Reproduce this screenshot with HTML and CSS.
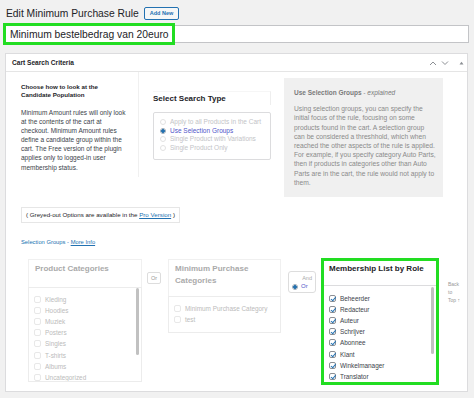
FILE: index.html
```html
<!DOCTYPE html>
<html lang="en">
<head>
  <meta charset="UTF-8">
  <meta name="viewport" content="width=device-width, initial-scale=1.0">
  <title>Edit Minimum Purchase Rule</title>
  <link rel="stylesheet" href="styles.css">
</head>
<body>
  <div class="page">
    <div class="title-row">
      <h1 class="title">Edit Minimum Purchase Rule</h1>
      <a class="add-new">Add New</a>
    </div>

    <div class="title-field">
      <input class="title-input" type="text" value="Minimum bestelbedrag van 20euro">
      <span class="highlight"></span>
    </div>

    <div class="postbox">
      <div class="postbox-header">
        <h2>Cart Search Criteria</h2>
        <div class="handle-actions">
          <svg width="8" height="6" viewBox="0 0 8 6"><polyline points="1,5 4,2 7,5" fill="none" stroke="#8c8f94" stroke-width="1"/></svg>
          <svg width="8" height="6" viewBox="0 0 8 6"><polyline points="1,1.5 4,4.5 7,1.5" fill="none" stroke="#8c8f94" stroke-width="1"/></svg>
          <svg width="5" height="4" viewBox="0 0 5 4"><polygon points="0.5,3.5 2.5,0.8 4.5,3.5" fill="#8c8f94"/></svg>
        </div>
      </div>

      <div class="inside">
        <div class="intro">
          <div class="intro-text">
            <h3>Choose how to look at the Candidate Population</h3>
            <p>Minimum Amount rules will only look at the contents of the cart at checkout. Minimum Amount rules define a candidate group within the cart. The Free version of the plugin applies only to logged-in user membership status.</p>
          </div>

          <div class="search-type">
            <h3>Select Search Type</h3>
            <div class="radio-box">
              <label class="radio disabled"><span class="dot"></span>Apply to all Products in the Cart</label>
              <label class="radio checked"><span class="dot"></span>Use Selection Groups</label>
              <label class="radio disabled"><span class="dot"></span>Single Product with Variations</label>
              <label class="radio disabled"><span class="dot"></span>Single Product Only</label>
            </div>
          </div>

          <div class="explain">
            <h4>Use Selection Groups <em>- explained</em></h4>
            <p>Using selection groups, you can specify the initial focus of the rule, focusing on some products found in the cart. A selection group can be considered a threshhold, which when reached the other aspects of the rule is applied. For example, if you specify category Auto Parts, then if products in categories other than Auto Parts are in the cart, the rule would not apply to them.</p>
          </div>
        </div>

        <div class="notice">( Greyed-out Options are available in the <a>Pro Version</a> )</div>

        <div class="groups-link">Selection Groups - <a>More Info</a></div>

        <div class="groups">
          <div class="group disabled">
            <div class="group-head">Product Categories</div>
            <div class="group-list tall-list">
              <div class="item"><span class="box"></span>Kleding</div>
              <div class="item"><span class="box"></span>Hoodies</div>
              <div class="item"><span class="box"></span>Muziek</div>
              <div class="item"><span class="box"></span>Posters</div>
              <div class="item"><span class="box"></span>Singles</div>
              <div class="item"><span class="box"></span>T-shirts</div>
              <div class="item"><span class="box"></span>Albums</div>
              <div class="item"><span class="box"></span>Uncategorized</div>
              <span class="scrollbar"></span>
            </div>
          </div>

          <div class="or-btn">Or</div>

          <div class="group disabled mpc">
            <div class="group-head two-line">Minimum Purchase Categories</div>
            <div class="group-list">
              <div class="item"><span class="box"></span>Minimum Purchase Category</div>
              <div class="item"><span class="box"></span>test</div>
            </div>
          </div>

          <div class="andor">
            <div class="andor-and">And</div>
            <label class="radio checked"><span class="dot"></span>Or</label>
          </div>

          <div class="group role">
            <div class="group-head">Membership List by Role</div>
            <div class="group-list tall-list">
              <div class="item"><span class="box on"></span>Beheerder</div>
              <div class="item"><span class="box on"></span>Redacteur</div>
              <div class="item"><span class="box on"></span>Auteur</div>
              <div class="item"><span class="box on"></span>Schrijver</div>
              <div class="item"><span class="box on"></span>Abonnee</div>
              <div class="item"><span class="box on"></span>Klant</div>
              <div class="item"><span class="box on"></span>Winkelmanager</div>
              <div class="item"><span class="box on"></span>Translator</div>
              <span class="scrollbar"></span>
            </div>
          </div>

          <div class="back-top">Back<br>to<br>Top &#8593;</div>
        </div>
      </div>
    </div>
  </div>
</body>
</html>
```

FILE: styles.css
```css
body {
  margin: 0;
  background: #f1f1f1;
  font-family: "Liberation Sans", Arial, sans-serif;
  color: #3c434a;
}
.page {
  padding: 4px 5px 0 5px;
}
.title-row {
  display: flex;
  align-items: center;
  gap: 5px;
  height: 18px;
  padding-left: 1px;
}
.title {
  margin: 0;
  font-size: 10.3px;
  font-weight: 400;
  color: #1d2327;
}
.add-new {
  font-size: 5.5px;
  font-weight: bold;
  color: #2271b1;
  border: 1px solid #2271b1;
  border-radius: 2px;
  background: #f6f7f7;
  padding: 0 5px;
  height: 11px;
  line-height: 11px;
}
.title-field {
  position: relative;
  margin-top: 3px;
}
.title-input {
  display: block;
  box-sizing: border-box;
  width: 100%;
  height: 18px;
  margin: 0;
  border: 1px solid #c3c4c7;
  background: #fff;
  padding: 0 4px;
  font-family: "Liberation Sans", Arial, sans-serif;
  font-size: 10.3px;
  color: #1d2327;
}
.highlight {
  position: absolute;
  left: -2px;
  top: -2px;
  width: 172px;
  height: 22px;
  box-sizing: border-box;
  border: 3px solid #22dd22;
}
.postbox {
  margin: 10px 1px 0 0;
  background: #fff;
  border: 1px solid #dcdcde;
}
.postbox-header {
  display: flex;
  align-items: center;
  justify-content: space-between;
  height: 17px;
  border-bottom: 1px solid #e5e5e5;
  padding: 0 3px 0 6px;
}
.postbox-header h2 {
  margin: 0;
  font-size: 6.6px;
  font-weight: bold;
  color: #1d2327;
}
.handle-actions {
  display: flex;
  align-items: center;
  gap: 4px;
}
.handle-actions svg {
  display: block;
}
.handle-actions svg:last-child {
  margin-left: 6px;
}
.inside {
  padding: 0 0 6px 15px;
}
.intro {
  display: flex;
  align-items: flex-start;
}
.intro-text {
  width: 110px;
  padding: 11px 7px 5px 0;
  border-right: 1px solid #f0f0f0;
}
.intro-text h3 {
  max-width: 96px;
  margin: 0 0 9px;
  font-size: 6.2px;
  line-height: 8px;
  font-weight: bold;
  color: #1d2327;
}
.intro-text p {
  margin: 0;
  font-size: 6.5px;
  line-height: 9.1px;
  color: #3c434a;
}
.search-type {
  width: 118px;
  margin: 19px 0 0 14px;
}
.search-type h3 {
  margin: 0;
  font-size: 8px;
  line-height: 13px;
  font-weight: bold;
  color: #1d2327;
  border-right: 1px solid #eeeeee;
  border-top: 1px solid #f6f6f6;
}
.radio-box {
  margin-top: 7px;
  border: 1px solid #dcdcde;
  border-radius: 2px;
  padding: 5px 6px 7px;
}
.radio {
  display: flex;
  align-items: center;
  gap: 4px;
  font-size: 6.5px;
  line-height: 8.5px;
  color: #c3c4c7;
}
.radio .dot {
  width: 6px;
  height: 6px;
  box-sizing: border-box;
  border: 1px solid #e2e2e2;
  border-radius: 50%;
  background: #fff;
}
.radio.checked {
  color: #4f55c9;
}
.radio.checked .dot {
  border-color: #9aa8b5;
  background: radial-gradient(circle, #2271b1 0 1.6px, #fff 1.9px);
}
.explain {
  width: 159px;
  box-sizing: border-box;
  margin: 6px 0 0 13px;
  background: #f0f0f0;
  padding: 10px 7px 10px 10px;
  color: #8a8a8a;
}
.explain h4 {
  margin: 0 0 7px;
  font-size: 6.5px;
  line-height: 9.2px;
  font-weight: bold;
  color: #7a7a7a;
}
.explain h4 em {
  font-weight: normal;
}
.explain p {
  margin: 0;
  font-size: 6.7px;
  line-height: 9.2px;
}
.notice {
  display: inline-block;
  margin-top: 10px;
  border: 1px solid #e6e6e6;
  padding: 0 4px;
  line-height: 14px;
  font-size: 6.2px;
  color: #1d2327;
}
.notice a,
.groups-link a {
  color: #2271b1;
  text-decoration: underline;
}
.groups-link {
  margin-top: 15px;
  font-size: 5.8px;
  line-height: 8px;
  color: #2271b1;
}
.groups {
  display: flex;
  align-items: flex-start;
  margin-top: 12px;
  padding-left: 7px;
}
.group {
  width: 114px;
  box-sizing: border-box;
}
.group.disabled {
  margin-top: 1px;
}
.group-head {
  box-sizing: border-box;
  min-height: 28px;
  border: 1px solid #f0f0f0;
  border-bottom: none;
  padding: 3px 6px 0;
  font-size: 8px;
  line-height: 12px;
  font-weight: bold;
  color: #aaaaaa;
}
.group-head.two-line {
  padding-bottom: 9px;
}
.group-list {
  position: relative;
  box-sizing: border-box;
  border: 1px solid #ececec;
  padding: 6px 0 7px 5px;
}
.group-list.tall-list {
  height: 95px;
  overflow: hidden;
}
.item {
  display: flex;
  align-items: center;
  gap: 4px;
  height: 11.1px;
  font-size: 6.4px;
  color: #bbbbbb;
}
.box {
  width: 7px;
  height: 7px;
  box-sizing: border-box;
  border: 1px solid #e8e8e8;
  border-radius: 2px;
  background: #fff;
}
.scrollbar {
  position: absolute;
  top: 0;
  right: 2px;
  width: 3px;
  height: 67px;
  border-radius: 2px;
  background: #c1c1c1;
}
.or-btn {
  margin: 14px 7px 0 5px;
  width: 14px;
  height: 12px;
  box-sizing: border-box;
  border: 1px solid #dddddd;
  border-radius: 2px;
  font-size: 5.5px;
  line-height: 10px;
  text-align: center;
  color: #999999;
}
.group.mpc {
  width: 113px;
}
.andor {
  margin: 13px 5px 0 7px;
  width: 28px;
  height: 22px;
  box-sizing: border-box;
  border: 1px solid #dddddd;
  border-radius: 3px;
  padding: 2px 3px 0 3px;
}
.andor-and {
  text-align: right;
  font-size: 5.5px;
  line-height: 8px;
  color: #aaaaaa;
}
.andor .radio {
  font-size: 6px;
  line-height: 9px;
  gap: 3px;
}
.group.role {
  width: 118px;
  border: 3px solid #22dd22;
}
.role .group-head {
  min-height: 24px;
  border: none;
  padding: 2px 5px 0;
  color: #1d2327;
}
.role .group-list {
  height: 97px;
  border: none;
  border-top: 1px solid #dcdcde;
  padding: 7px 0 0 5px;
}
.role .scrollbar {
  top: 1px;
}
.role .item {
  color: #3c434a;
}
.box.on {
  position: relative;
  border-color: #8c8f94;
}
.box.on::after {
  content: "";
  position: absolute;
  left: 1.5px;
  top: 0;
  width: 2px;
  height: 3.5px;
  border: solid #2271b1;
  border-width: 0 1.2px 1.2px 0;
  transform: rotate(40deg);
}
.back-top {
  margin: 22px 0 0 9px;
  font-size: 5px;
  line-height: 8px;
  color: #999999;
}
```
